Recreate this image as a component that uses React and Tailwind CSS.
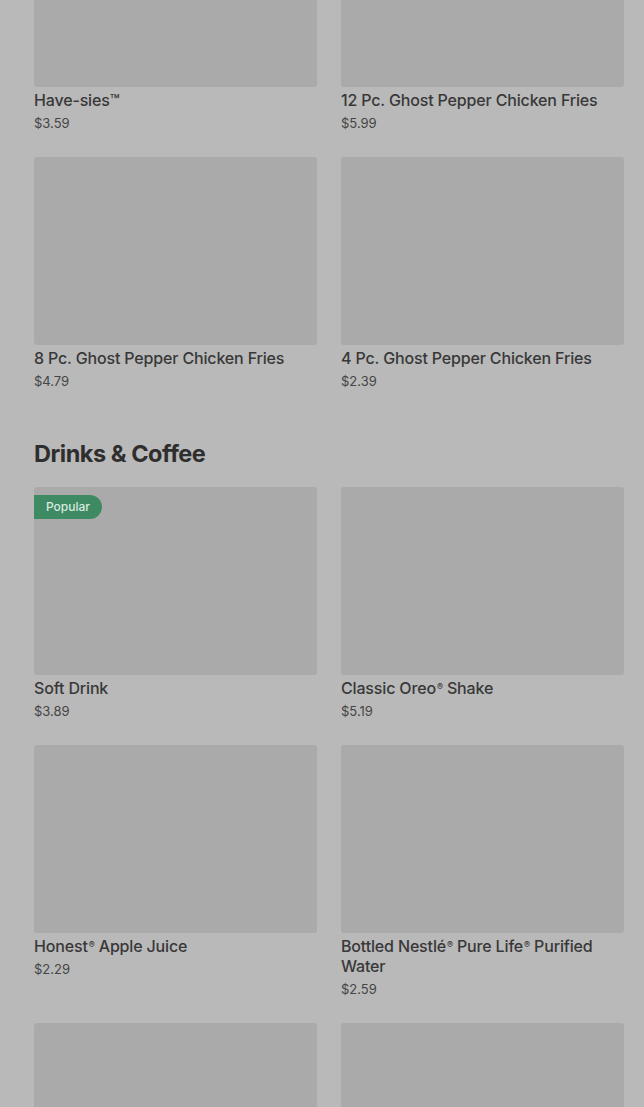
const fries = [
  { name: 'Have-sies™', price: '$3.59' },
  { name: '12 Pc. Ghost Pepper Chicken Fries', price: '$5.99' },
  { name: '8 Pc. Ghost Pepper Chicken Fries', price: '$4.79' },
  { name: '4 Pc. Ghost Pepper Chicken Fries', price: '$2.39' },
];

const drinks = [
  { name: 'Soft Drink', price: '$3.89', popular: true },
  { name: 'Classic Oreo® Shake', price: '$5.19' },
  { name: 'Honest® Apple Juice', price: '$2.29' },
  { name: 'Bottled Nestlé® Pure Life® Purified Water', price: '$2.59' },
  { name: 'Chocolate Frosty®', price: '$2.49' },
  { name: 'Vanilla Frosty®', price: '$2.49' },
];

// small raised ® like the menu font renders it
function Name({ text }) {
  const parts = text.split('®');
  return parts.map((part, i) => (
    <span key={i}>
      {part}
      {i < parts.length - 1 && <sup className="ml-[1px] text-[9px]">®</sup>}
    </span>
  ));
}

function ItemCard({ item }) {
  return (
    <div className="flex flex-col">
      <div className="relative h-[188px] rounded-[3px] bg-[#aaaaaa]">
        {item.popular && (
          <span className="absolute left-0 top-2 flex h-6 items-center rounded-r-full bg-[#3e8a63] px-3 text-[12px] font-medium text-[#d9e9e0]">
            Popular
          </span>
        )}
      </div>
      <p className="mt-[3px] text-[16px] leading-5 font-medium tracking-[-0.01em] text-[#383838]">
        <Name text={item.name} />
      </p>
      <p className="mt-[3px] text-[13px] leading-5 text-[#454545]">{item.price}</p>
    </div>
  );
}

export default function App() {
  return (
    <div className="h-[1107px] overflow-hidden bg-[#b9b9b9] font-['Inter',sans-serif]">
      <div className="-mt-[101px] pl-[34px] pr-[20px]">
        <section className="mb-[47px]">
          <div className="grid grid-cols-2 gap-6">
            {fries.map((item) => (
              <ItemCard key={item.name} item={item} />
            ))}
          </div>
        </section>

        <section>
          <h2 className="mb-[17px] text-[23.5px] leading-8 font-bold tracking-[-0.02em] text-[#2e2e2e]">
            Drinks &amp; Coffee
          </h2>
          <div className="grid grid-cols-2 gap-6">
            {drinks.map((item) => (
              <ItemCard key={item.name} item={item} />
            ))}
          </div>
        </section>
      </div>
    </div>
  );
}
